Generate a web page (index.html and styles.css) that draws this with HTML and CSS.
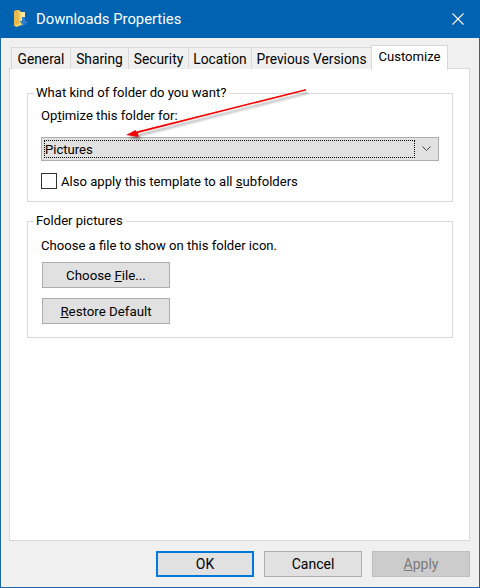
FILE: index.html
```html
<!DOCTYPE html>
<html lang="en">
<head>
<meta charset="utf-8">
<title>Downloads Properties</title>
<link rel="stylesheet" href="styles.css">
</head>
<body>
<div class="window">
  <header class="titlebar">
    <svg class="folder-icon" width="16" height="20" viewBox="0 0 16 20">
      <path d="M1 2 L6 1 L8 3 L8 4 L12 4 L12 15 L3 18 L1 16 Z" fill="#f6d66e"/>
      <path d="M1 2 L6 1 L6 15 L1 17 Z" fill="#e9bb4f"/>
      <path d="M8 3 L12 3 L12 12 L8 12 Z" fill="#fbe9a8"/>
      <path d="M9 8 H12 V12 H15 L10.5 17 L6.5 12 H9 Z" fill="#2b7fd0"/>
    </svg>
    <span class="title">Downloads Properties</span>
    <svg class="close" width="12" height="12" viewBox="0 0 12 12">
      <path d="M0.5 0.5 L11.5 11.5 M11.5 0.5 L0.5 11.5" stroke="#fff" stroke-width="1.1" fill="none"/>
    </svg>
  </header>
  <nav class="tabs">
    <span class="tab t-general">General</span>
    <span class="tab t-sharing">Sharing</span>
    <span class="tab t-security">Security</span>
    <span class="tab t-location">Location</span>
    <span class="tab t-previous">Previous Versions</span>
    <span class="tab active">Customize</span>
  </nav>
  <main class="panel">
    <fieldset class="group g-kind">
      <legend>What kind of folder do you want?</legend>
      <div class="label">Op<u>t</u>imize this folder for:</div>
      <div class="combo">
        <div class="combo-value"><span>Pictures</span></div>
        <svg class="chev" width="9" height="5" viewBox="0 0 9 5">
          <path d="M0.4 0.4 L4.5 4.5 L8.6 0.4" stroke="#444" stroke-width="1" fill="none"/>
        </svg>
      </div>
      <label class="check-row"><span class="check"></span><span>Also apply this template to all <u>s</u>ubfolders</span></label>
    </fieldset>
    <fieldset class="group g-pics">
      <legend>Folder pictures</legend>
      <div class="label">Choose a file to show on this folder icon.</div>
      <div class="btn wide first"><span>Choose <u>F</u>ile...</span></div>
      <div class="btn wide">
        <span><u>R</u>estore Default</span>
      </div>
    </fieldset>
  </main>
  <footer class="footer">
    <div class="btn foot default">OK</div>
    <div class="btn foot">Cancel</div>
    <div class="btn foot disabled"><span><u>A</u>pply</span></div>
  </footer>
  <svg class="arrow" width="200" height="60" viewBox="0 0 200 60">
    <path d="M180 3 L180.2 4.4 L12 47 L12.5 51 L0 49 L9.5 44 L10.2 45.6 Z" fill="#f40000"/>
  </svg>
</div>
</body>
</html>
```

FILE: styles.css
```css
* { box-sizing: border-box; }
html, body { margin: 0; padding: 0; }
body {
  width: 480px;
  height: 588px;
  overflow: hidden;
  font-family: Roboto, "Liberation Sans", sans-serif;
  font-size: 13.1px;
  color: #000;
  background: #f0f0f0;
}
.window {
  position: relative;
  width: 480px;
  height: 588px;
  display: flex;
  flex-direction: column;
  background: #f0f0f0;
  border: 1px solid #1a6aab;
  border-top: 0;
}
.titlebar {
  height: 38px;
  margin: 0 -1px;
  padding: 0 16px 0 13px;
  display: flex;
  align-items: center;
  background: #0063b1;
  color: #fff;
}
.folder-icon { flex: none; margin-right: 7px; margin-top: -1px; }
.title { flex: 1; font-size: 14.8px; white-space: nowrap; }
.close { flex: none; margin-top: -1px; }
.tabs {
  height: 31px;
  padding: 8px 0 0 10px;
  display: flex;
  align-items: flex-end;
  position: relative;
  z-index: 1;
  margin-bottom: -1px;
  font-size: 13.8px;
}
.tab {
  height: 22px;
  display: flex;
  align-items: center;
  justify-content: center;
  background: #f0f0f0;
  border: 1px solid #d9d9d9;
  border-bottom: 0;
  border-left: 0;
  white-space: nowrap;
}
.t-general { width: 60px; border-left: 1px solid #d9d9d9; }
.t-sharing { width: 58px; }
.t-security { width: 60px; }
.t-location { width: 63px; }
.t-previous { width: 120px; }
.tab.active {
  width: 77px;
  height: 25px;
  font-size: 13.1px;
  background: #fff;
  border: 1px solid #d9d9d9;
  border-bottom: 0;
  padding-bottom: 3px;
  position: relative;
  z-index: 2;
  margin-bottom: -1px;
  margin-left: -1px;
}
.panel {
  width: 461px;
  height: 473px;
  margin-left: 8px;
  padding: 15px 16px 0 17px;
  background: #fff;
  border: 1px solid #d9d9d9;
}
.group {
  margin: 0;
  padding: 0 13px;
  border: 1px solid #d9d9d9;
  min-width: 0;
}
.group legend {
  padding: 0 3px 0 2px;
  margin-left: -7px;
  line-height: 18px;
}
.g-kind { height: 118px; }
.g-pics { height: 126px; margin-top: 10px; }
.label { line-height: 18px; margin-top: 5px; }
.g-pics .label { margin-top: 7px; }
.combo {
  width: 398px;
  height: 24px;
  margin-top: 12px;
  padding: 2px 0 2px 2px;
  display: flex;
  align-items: stretch;
  background: #e1e1e1;
  border: 1px solid #adadad;
}
.combo-value {
  flex: 1;
  display: flex;
  align-items: center;
  border: 1px dotted #000;
}
.chev { flex: none; margin: 6px 7px 0 7px; }
.check-row {
  display: flex;
  align-items: center;
  gap: 4px;
  margin-top: 11px;
  height: 18px;
}
.check {
  flex: none;
  width: 16px;
  height: 16px;
  background: #fff;
  border: 1px solid #333;
}
.btn {
  display: flex;
  align-items: center;
  justify-content: center;
  height: 26px;
  background: #e1e1e1;
  border: 1px solid #adadad;
  white-space: nowrap;
}
.wide { width: 128px; margin-left: 1px; margin-top: 10px; font-size: 13.3px; }
.wide.first { margin-top: 7px; }
.footer {
  flex: 1;
  display: flex;
  justify-content: flex-end;
  gap: 10px;
  padding: 10px 9px 0 0;
  align-items: flex-start;
  font-size: 14px;
}
.foot { width: 98px; }
.foot.default { border: 2px solid #0078d7; }
.foot.disabled { background: #cccccc; border-color: #bfbfbf; color: #7a7a7a; }
.arrow {
  position: absolute;
  left: 125px;
  top: 86px;
  filter: drop-shadow(2px 3px 1px rgba(0, 0, 0, 0.35));
}
```
